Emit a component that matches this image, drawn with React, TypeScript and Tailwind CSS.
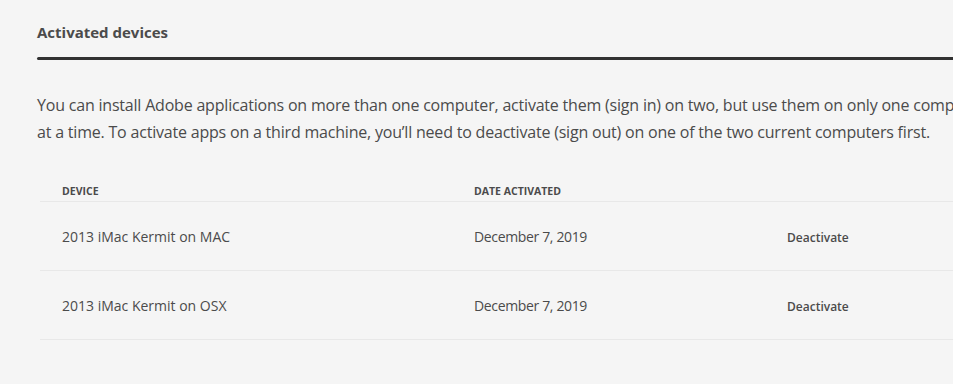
import React from "react";

const rows = [
  { device: "2013 iMac Kermit on MAC", date: "December 7, 2019" },
  { device: "2013 iMac Kermit on OSX", date: "December 7, 2019" },
];

export default function App() {
  return (
    <div
      className="w-[953px] h-[384px] overflow-hidden bg-[#f5f5f5] text-[#4b4b4b]"
      style={{ fontFamily: '"Open Sans", "Liberation Sans", sans-serif' }}
    >
      <div className="w-[1100px] pl-[37px] pt-[20px]">
        <h2 className="text-[15px] leading-[24px] font-bold text-[#4b4b4b]">Activated devices</h2>
        <div className="mt-[13px] h-[3px] bg-[#323232] rounded-l-full" />
        <p className="mt-[32px] text-[16px] leading-[27px] text-[#4b4b4b] tracking-[-0.2px]">
          You can install Adobe applications on more than one computer, activate them (sign in) on two, but use them on only one computer
          <br />
          at a time. To activate apps on a third machine, you’ll need to deactivate (sign out) on one of the two current computers first.
        </p>
        <div className="mt-[38px] ml-[3px]">
          <div className="grid grid-cols-[410px_295px_1fr] border-b border-[#e8e8e8] h-[18px]">
            <div className="pl-[22px] text-[10.5px] leading-[14px] font-bold uppercase text-[#4b4b4b]">Device</div>
            <div className="pl-[24px] text-[10.5px] leading-[14px] font-bold uppercase text-[#4b4b4b]">Date activated</div>
            <div />
          </div>
          {rows.map((r, i) => (
            <div key={i} className="grid grid-cols-[410px_295px_1fr] h-[69px] border-b border-[#e8e8e8] items-center">
              <div className="pl-[22px] pt-[1px] text-[14px] text-[#4b4b4b]">{r.device}</div>
              <div className="pl-[24px] pt-[1px] text-[14px] tracking-[-0.35px] text-[#4b4b4b]">{r.date}</div>
              <div className="pl-[42px] pt-[4px] text-[12px] font-semibold text-[#4b4b4b]">Deactivate</div>
            </div>
          ))}
        </div>
      </div>
    </div>
  );
}
